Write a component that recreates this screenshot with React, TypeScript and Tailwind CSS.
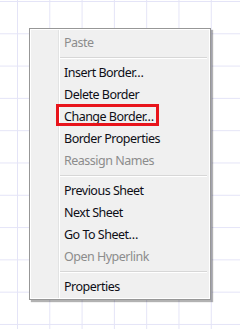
import React from 'react'

type Item = { label: string; disabled?: boolean; marked?: boolean } | 'sep'

const items: Item[] = [
  { label: 'Paste', disabled: true },
  'sep',
  { label: 'Insert Border…' },
  { label: 'Delete Border' },
  { label: 'Change Border…', marked: true },
  { label: 'Border Properties' },
  { label: 'Reassign Names', disabled: true },
  'sep',
  { label: 'Previous Sheet' },
  { label: 'Next Sheet' },
  { label: 'Go To Sheet…' },
  { label: 'Open Hyperlink', disabled: true },
  'sep',
  { label: 'Properties' },
]

const App = () => {
  return (
    <div
      className="w-[240px] h-[329px] overflow-hidden bg-white pt-[28px] pl-[29px] bg-[linear-gradient(to_right,#e4e4f7_1px,transparent_1px),linear-gradient(to_bottom,#e4e4f7_1px,transparent_1px)] bg-[size:32.3px_32.3px] bg-[position:17px_1px]"
      style={{ fontFamily: '"Noto Sans", "Liberation Sans", sans-serif' }}
    >
      <div className="w-[182px] border border-[#979797] bg-[#f0f0f0] shadow-[2px_2px_1px_rgba(0,0,0,0.3)]">
        <div className="flex border border-white">
          {/* icon gutter */}
          <div className="w-[28px] border-r border-[#e2e3e3]" />
          <div className="flex-1 border-l border-white pt-[2px]">
            {items.map((item, i) =>
              item === 'sep' ? (
                <div key={i} className="h-[8px] flex flex-col justify-center pr-[2px]">
                  <div className="h-px bg-[#d7d7d7]" />
                  <div className="h-px bg-white" />
                </div>
              ) : (
                <div
                  key={i}
                  className={
                    'h-[22px] flex items-center pl-[4px] text-[12.5px] tracking-[-0.5px] ' +
                    (item.disabled ? 'text-[#8c8c8c]' : 'text-[#0e0e16]')
                  }
                >
                  <span className="relative">
                    {item.label}
                    {item.marked && (
                      <span className="absolute left-[-8px] top-[-4px] w-[103px] h-[22px] border-[3px] border-[#e8141b]" />
                    )}
                  </span>
                </div>
              )
            )}
          </div>
        </div>
      </div>
    </div>
  )
}

export default App
